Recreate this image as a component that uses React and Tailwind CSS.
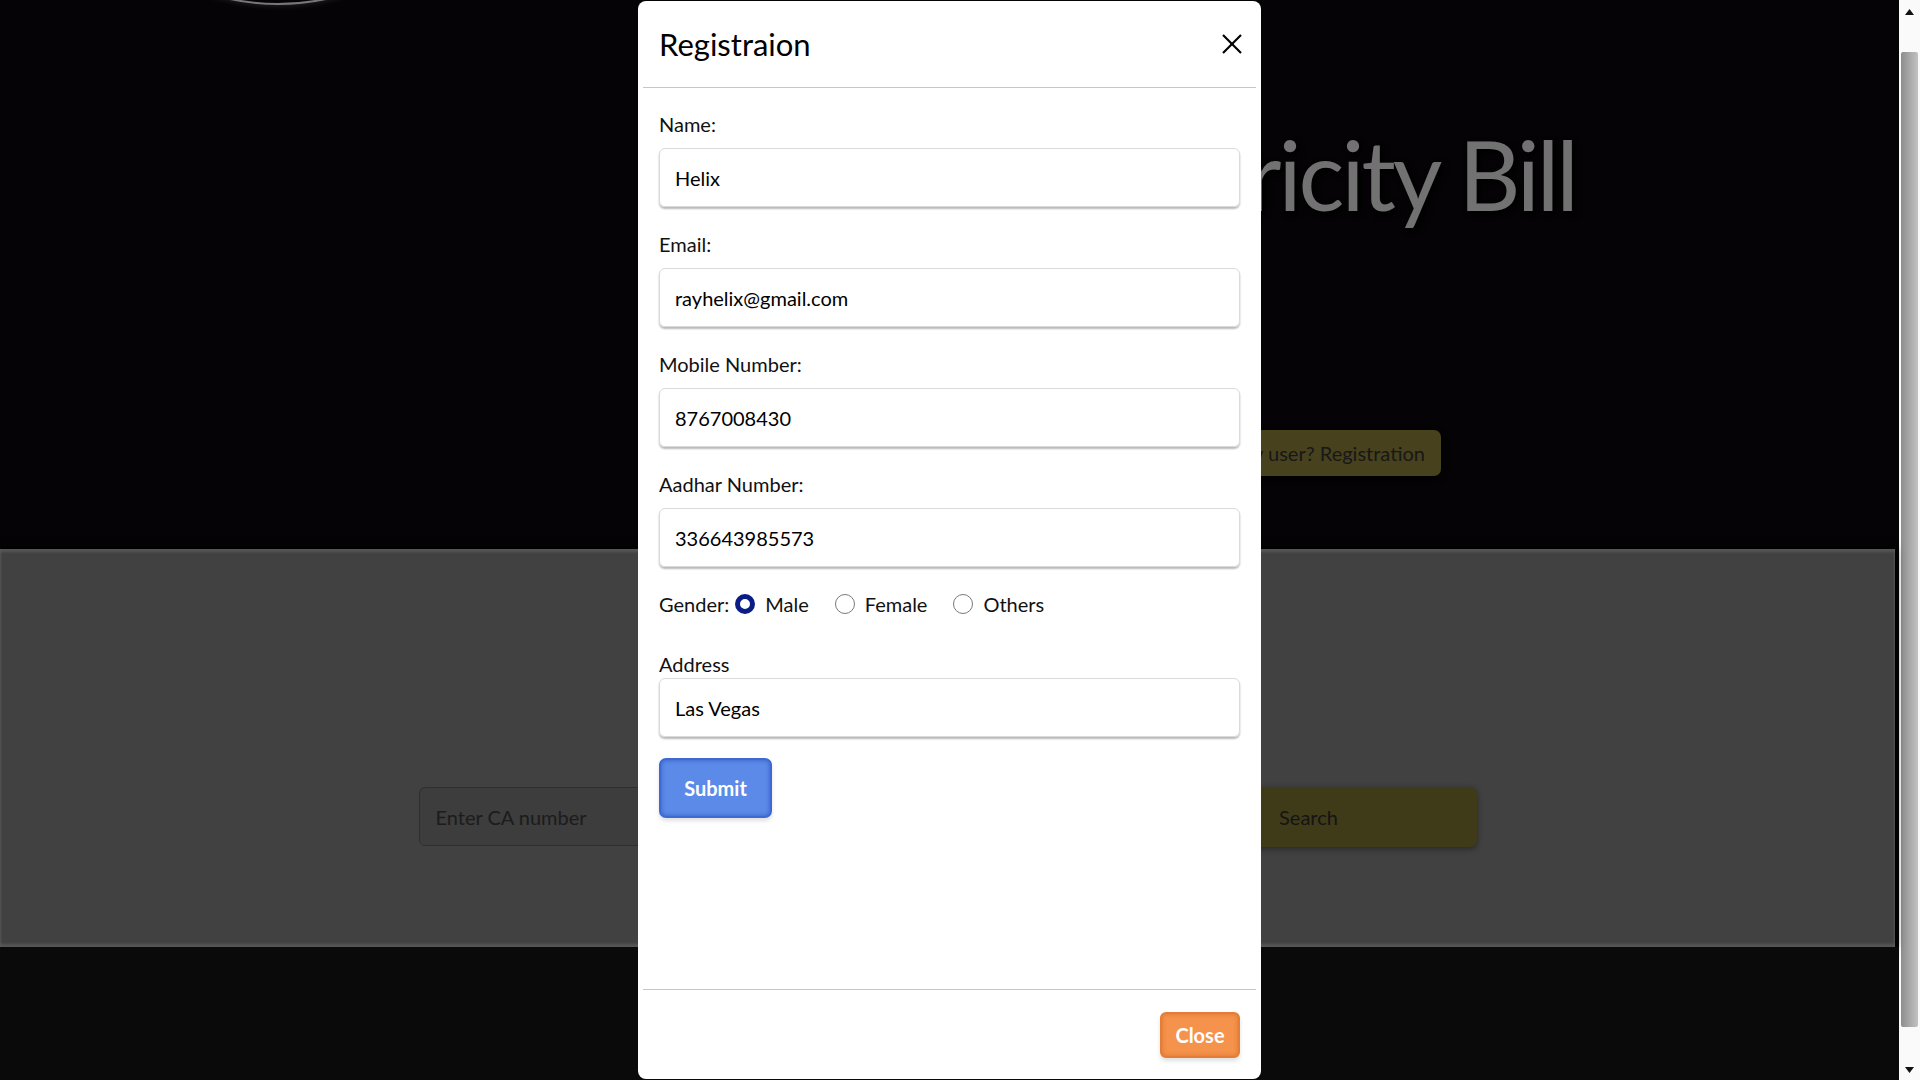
export default function App() {
  const fields = [
    { label: "Name:", value: "Helix" },
    { label: "Email:", value: "rayhelix@gmail.com" },
    { label: "Mobile Number:", value: "8767008430" },
    { label: "Aadhar Number:", value: "336643985573" },
  ];

  return (
    <div className="flex h-[1080px] w-full overflow-hidden font-['Lato',sans-serif]">
      {/* page area */}
      <div className="relative flex h-full flex-1 flex-col bg-[#0a060a]">
        {/* top hero */}
        <div className="flex h-[549px] shrink-0">
          <div className="ml-[45px] -mt-[461px] h-[466px] w-[466px] shrink-0 rounded-full border-2 border-[#f0f0f0] shadow-[0_0_6px_rgba(255,255,255,0.3)]" />
          <div className="flex flex-1 flex-col items-end pr-[323px] pt-[126px]">
            <div className="text-[96px] font-normal leading-none tracking-[-3px] text-[#e4e4e4] [text-shadow:3px_3px_6px_rgba(0,0,0,0.9)]">
              Electricity Bill
            </div>
            <div className="mr-[135px] mt-[208px] flex h-[46px] items-center rounded-[7px] bg-[#8e843a] px-4 text-[20px] text-[#303030] shadow-[0_2px_6px_rgba(0,0,0,0.8)]">
              New user? Registration
            </div>
          </div>
        </div>

        {/* search band */}
        <div className="mr-[4px] flex h-[398px] shrink-0 justify-center bg-[#828282] pt-[238px] shadow-[inset_0_3px_3px_rgba(255,255,255,0.35),inset_0_-3px_3px_rgba(255,255,255,0.35),0_0_8px_rgba(0,0,0,0.9)]">
          <div className="flex h-[60px]">
            <div className="flex h-[59px] w-[722px] items-center rounded-l-[6px] border border-[#5e5e5e] bg-[#7a7a7a] px-4 text-[20px] text-[#383838]">
              Enter CA number
            </div>
            <div className="flex h-[60px] w-[336px] items-center justify-center rounded-r-[7px] bg-[#7e7430] text-[20px] text-[#2a2a2a] shadow-[0_2px_6px_rgba(0,0,0,0.4)]">
              Search
            </div>
          </div>
        </div>

        {/* bottom */}
        <div className="flex-1 bg-[#141414]" />

        {/* backdrop + modal */}
        <div className="absolute inset-0 flex justify-center bg-black/50">
          <div className="mt-px flex h-[1078px] w-[623px] flex-col rounded-[8px] bg-white px-[5px] text-[#111]">
            {/* header */}
            <div className="flex h-[87px] shrink-0 items-center justify-between border-b border-[#c6c6c6] pl-4 pr-[13px]">
              <div className="text-[31px] leading-none text-black">Registraion</div>
              <svg width="22" height="22" viewBox="0 0 22 22">
                <line x1="2" y1="2" x2="20" y2="20" stroke="#000" strokeWidth="2.2" />
                <line x1="20" y1="2" x2="2" y2="20" stroke="#000" strokeWidth="2.2" />
              </svg>
            </div>

            {/* body */}
            <div className="flex flex-1 flex-col px-4 pt-[22px]">
              {fields.map((f) => (
                <div key={f.label} className="flex flex-col">
                  <div className="mb-[10px] h-[28px] text-[20px] leading-[28px]">{f.label}</div>
                  <div className="mb-[23px] flex h-[59px] items-center rounded-[6px] border border-[#dadada] px-[15px] text-[20px] text-black shadow-[0_2px_2px_rgba(0,0,0,0.28)]">
                    {f.value}
                  </div>
                </div>
              ))}

              {/* gender */}
              <div className="mb-[32px] flex h-[28px] items-center text-[20px] leading-[28px]">
                <span>Gender:</span>
                <span className="ml-[6px] h-[20px] w-[20px] rounded-full border-[5px] border-[#0b1c86] bg-white" />
                <span className="ml-[10px]">Male</span>
                <span className="ml-[26px] h-[20px] w-[20px] rounded-full border border-[#7a7a7a] bg-white" />
                <span className="ml-[10px]">Female</span>
                <span className="ml-[26px] h-[20px] w-[20px] rounded-full border border-[#7a7a7a] bg-white" />
                <span className="ml-[10px]">Others</span>
              </div>

              {/* address */}
              <div className="h-[28px] text-[20px] leading-[28px]">Address</div>
              <div className="mb-[21px] flex h-[59px] items-center rounded-[6px] border border-[#dadada] px-[15px] text-[20px] text-black shadow-[0_2px_2px_rgba(0,0,0,0.28)]">
                Las Vegas
              </div>

              <div className="flex">
                <div className="flex h-[60px] w-[113px] items-center justify-center rounded-[7px] border-2 border-[#3f69d2] bg-[#5b8ae8] text-[20px] font-bold text-white shadow-[inset_0_0_4px_rgba(30,60,170,0.6),0_3px_4px_rgba(0,0,0,0.12)]">
                  Submit
                </div>
              </div>
            </div>

            {/* footer */}
            <div className="flex h-[90px] shrink-0 items-center justify-end border-t border-[#c6c6c6] px-4">
              <div className="flex h-[46px] w-[80px] items-center justify-center rounded-[6px] border-2 border-[#e37d37] bg-[#f5924b] text-[20px] font-bold text-white shadow-[inset_0_0_4px_rgba(190,90,20,0.5),0_3px_4px_rgba(0,0,0,0.12)]">
                Close
              </div>
            </div>
          </div>
        </div>
      </div>

      {/* scrollbar */}
      <div className="flex h-full w-[21px] shrink-0 flex-col items-center bg-[#fafafa]">
        <svg className="mt-[9px]" width="9" height="6" viewBox="0 0 9 6">
          <polygon points="4.5,0 9,6 0,6" fill="#111" />
        </svg>
        <div className="ml-[-1px] mt-[37px] h-[975px] w-[17px] rounded-[2px] bg-gradient-to-r from-[#8d8d8d] via-[#a8a8a8] to-[#c2c2c2]" />
        <div className="flex-1" />
        <svg className="mb-[7px]" width="9" height="6" viewBox="0 0 9 6">
          <polygon points="0,0 9,0 4.5,6" fill="#111" />
        </svg>
      </div>
    </div>
  );
}
